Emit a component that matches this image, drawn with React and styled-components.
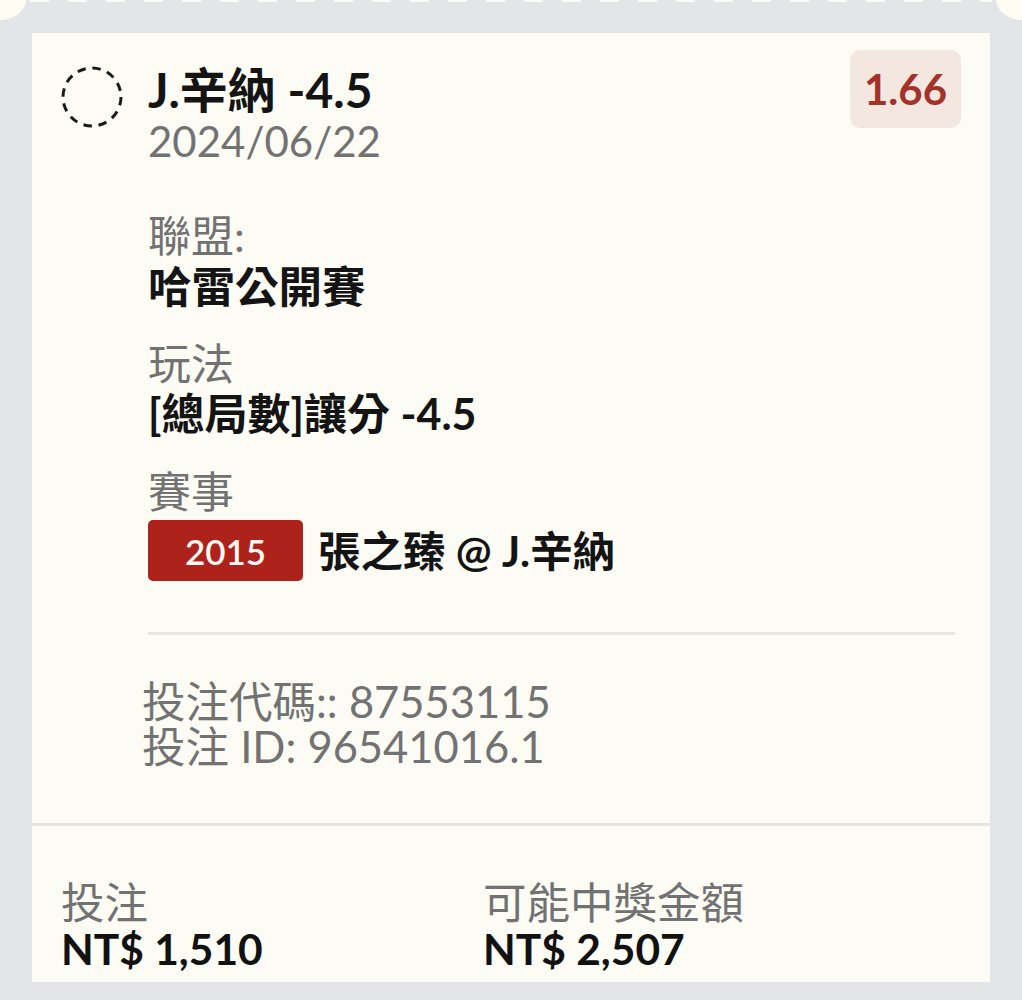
import React from "react";
import styled, { createGlobalStyle } from "styled-components";

const Global = createGlobalStyle`
  html, body { margin: 0; padding: 0; background: #e4e5e7; }
  body { font-family: Lato, "Noto Sans CJK TC", sans-serif; }
`;

const Page = styled.div`
  width: 1022px;
  height: 1000px;
  overflow: hidden;
  background: #e4e5e7;
`;

const TopEdge = styled.div`
  position: relative;
  height: 33px;
`;

const Perforation = styled.div`
  position: absolute;
  left: 30px;
  right: 30px;
  top: 0;
  height: 2px;
  background: repeating-linear-gradient(90deg, #fbfbf6 0 19px, transparent 19px 38px);
`;

const Notch = styled.div`
  position: absolute;
  top: -22px;
  ${(p) => (p.$side === "left" ? "left: -26px;" : "right: -26px;")}
  width: 52px;
  height: 42px;
  border-radius: 50%;
  background: #fcfcf3;
`;

const Card = styled.div`
  margin: 0 32px;
  height: 949px;
  background: #fcfcf5;
  display: flex;
  flex-direction: column;
`;

const Main = styled.div`
  padding: 17px 29px 0 28px;
`;

const Header = styled.div`
  display: flex;
  align-items: flex-start;
`;

const Status = styled.svg`
  flex: none;
  margin-top: 15px;
  width: 64px;
  height: 64px;
`;

const TitleBlock = styled.div`
  flex: 1;
  margin-left: 24px;
  margin-top: 13px;
`;

const Title = styled.div`
  font-size: 48px;
  line-height: 53px;
  font-weight: 700;
  color: #141414;
`;

const Muted = styled.div`
  font-size: ${(p) => p.$size || 42}px;
  line-height: ${(p) => p.$lh || 50}px;
  color: #727272;
`;

const Odds = styled.div`
  flex: none;
  background: #f3e7e0;
  color: #a43228;
  border-radius: 10px;
  font-size: 42px;
  font-weight: 700;
  line-height: 78px;
  padding: 0 14px;
`;

const Details = styled.div`
  padding-left: 88px;
  margin-top: 45px;
  display: flex;
  flex-direction: column;
  gap: 28px;
`;

const Field = styled.div``;

const Value = styled.div`
  font-size: ${(p) => p.$size || 43.5}px;
  line-height: 50px;
  font-weight: 700;
  color: #141414;
`;

const MatchRow = styled.div`
  display: flex;
  align-items: center;
  gap: 15px;
  margin-top: 3px;
`;

const MatchId = styled.span`
  width: 155px;
  height: 61px;
  border-radius: 5px;
  background: #ad231c;
  color: #fbf7f2;
  font-size: 35px;
  font-weight: 600;
  display: flex;
  align-items: center;
  justify-content: center;
`;

const Divider = styled.hr`
  border: none;
  height: 3px;
  background: #e6e6e0;
  margin: 51px 6px 0 88px;
`;

const Codes = styled.div`
  padding: 44px 0 0 82px;
`;

const CardRule = styled.div`
  margin-top: auto;
  height: 3px;
  background: #e6e6e0;
`;

const Footer = styled.div`
  display: grid;
  grid-template-columns: 422px 1fr;
  padding: 52px 0 12px 29px;
  height: 156px;
  box-sizing: border-box;
`;

const Amount = styled.div`
  font-size: 42.5px;
  line-height: 46px;
  font-weight: 700;
  color: #111;
`;

const FooterPart = styled.div``;

export default function App() {
  return (
    <Page>
      <Global />
      <TopEdge>
        <Perforation />
        <Notch $side="left" />
        <Notch $side="right" />
      </TopEdge>
      <Card>
        <Main>
          <Header>
            <Status viewBox="0 0 64 64">
              <circle cx="32" cy="32" r="29" fill="none" stroke="#1a1a1a" strokeWidth="3" strokeDasharray="8.5 6.7" />
            </Status>
            <TitleBlock>
              <Title>J.辛納 -4.5</Title>
              <Muted>2024/06/22</Muted>
            </TitleBlock>
            <Odds>1.66</Odds>
          </Header>
          <Details>
            <Field>
              <Muted $size={43}>聯盟:</Muted>
              <Value>哈雷公開賽</Value>
            </Field>
            <Field>
              <Muted $size={43}>玩法</Muted>
              <Value $size={43}>[總局數]讓分 -4.5</Value>
            </Field>
            <Field>
              <Muted $size={43}>賽事</Muted>
              <MatchRow>
                <MatchId>2015</MatchId>
                <Value $size={42.5}>張之臻 @ J.辛納</Value>
              </MatchRow>
            </Field>
          </Details>
          <Divider />
          <Codes>
            <Muted $size={43.5} $lh={45}>投注代碼:: 87553115</Muted>
            <Muted $size={43.5} $lh={45}>投注 ID: 96541016.1</Muted>
          </Codes>
        </Main>
        <CardRule />
        <Footer>
          <FooterPart>
            <Muted $size={43.5} $lh={48}>投注</Muted>
            <Amount>NT$ 1,510</Amount>
          </FooterPart>
          <FooterPart>
            <Muted $size={43.5} $lh={48}>可能中獎金額</Muted>
            <Amount>NT$ 2,507</Amount>
          </FooterPart>
        </Footer>
      </Card>
    </Page>
  );
}
